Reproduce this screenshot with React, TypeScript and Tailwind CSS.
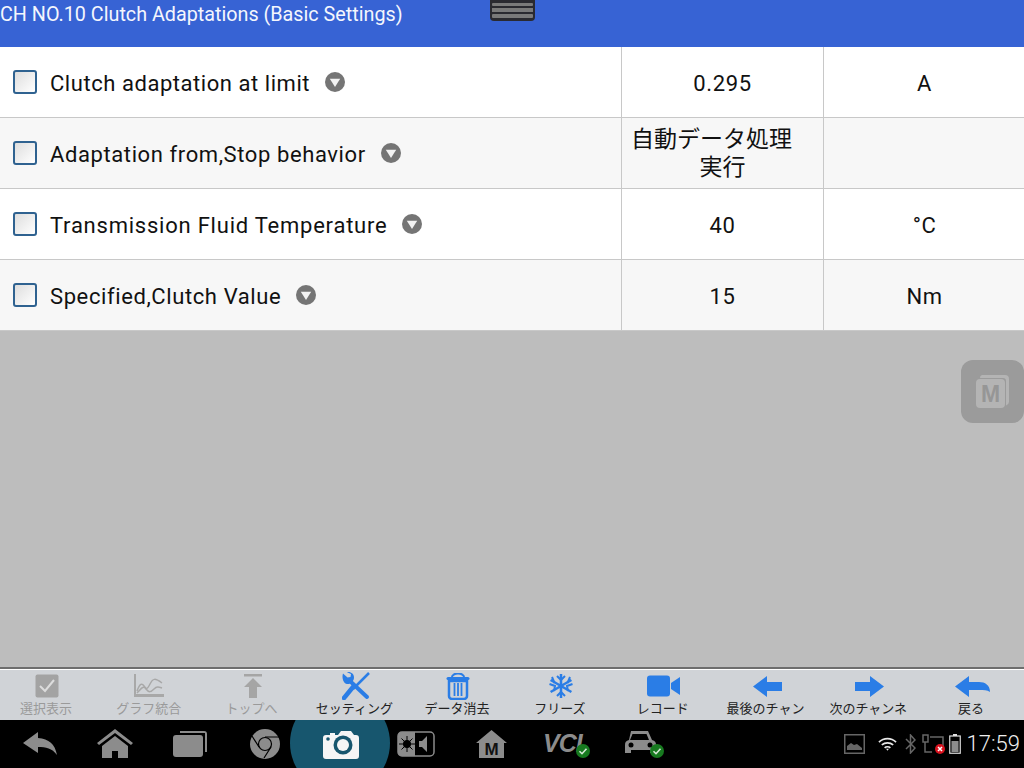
import type { ReactNode } from "react";

const rows: { name: string; value: ReactNode; unit: string; track: string }[] = [
  { name: "Clutch adaptation at limit", value: "0.295", unit: "A", track: "tracking-[0.55px]" },
  {
    name: "Adaptation from,Stop behavior",
    value: (
      <div className="text-[23px] leading-[28px] tracking-normal">
        <div className="pr-[22px] whitespace-nowrap">自動データ処理</div>
        <div>実行</div>
      </div>
    ),
    unit: "",
    track: "tracking-[0.6px]",
  },
  { name: "Transmission Fluid Temperature", value: "40", unit: "°C", track: "tracking-[0.77px]" },
  { name: "Specified,Clutch Value", value: "15", unit: "Nm", track: "tracking-[0.6px]" },
];

function Caret() {
  return (
    <svg width="20" height="20" viewBox="0 0 20 20" className="shrink-0">
      <circle cx="10" cy="10" r="10" fill="#757575" />
      <path d="M4.8 6.8h10.4L10 15z" fill="#f2f2f2" />
    </svg>
  );
}

function Badge() {
  return (
    <svg width="14" height="14" viewBox="0 0 14 14" className="absolute right-0 bottom-0">
      <circle cx="7" cy="7" r="7" fill="#177a1f" />
      <path d="M3.500 7.200l2.500 2.500 4.500-5" stroke="#d8e8d8" strokeWidth="1.600" fill="none" />
    </svg>
  );
}

function Tool({ label, off, children }: { label: string; off?: boolean; children: ReactNode }) {
  return (
    <div className="flex flex-col items-center w-[102.8px] shrink-0">
      <div className="h-[32px] flex items-center justify-center">{children}</div>
      <span className={`mr-[3px] text-[13px] leading-[14px] whitespace-nowrap ${off ? "text-[#9a9a9a]" : "text-[#222]"}`}>{label}</span>
    </div>
  );
}

export default function App() {
  return (
    <div className="w-[1024px] h-[768px] relative overflow-hidden flex flex-col bg-[#bdbdbd] font-['Roboto','Noto_Sans_CJK_JP',sans-serif]">
      <div className="h-[47px] shrink-0 bg-[#3763d4] text-[#f4f6fd] text-[19.75px] leading-[30px] whitespace-nowrap">
        CH NO.10 Clutch Adaptations (Basic Settings)
      </div>

      {/* pull-down handle */}
      <div className="absolute left-[490px] top-0 w-[45px] h-[21px] bg-[#2a2a30] rounded-b-[4px] flex flex-col justify-center gap-[2px] px-[2px] pb-[1px]">
        <div className="h-[3px] bg-[#7a7a7a] rounded-[1px]" />
        <div className="h-[4px] bg-[#7a7a7a]" />
        <div className="h-[4px] bg-[#7a7a7a] rounded-[1px]" />
      </div>

      <div className="shrink-0">
        {rows.map((r, i) => (
          <div
            key={r.name}
            className={`h-[71px] flex border-b border-[#c8c8c8] ${i % 2 ? "bg-[#f7f7f7]" : "bg-white"}`}
          >
            <div className="w-[621px] shrink-0 flex items-center pl-[13px]">
              <div className="w-[24px] h-[24px] shrink-0 rounded-[3px] border-2 border-[#2f6290] bg-gradient-to-br from-[#dedede] to-white" />
              <span className={`ml-[13px] mr-[15px] pt-[2px] text-[22px] text-[#111] whitespace-nowrap ${r.track}`}>{r.name}</span>
              <Caret />
            </div>
            <div className="w-[202px] shrink-0 border-l border-[#c8c8c8] flex items-center justify-center text-center text-[22px] tracking-[0.6px] pt-[2px] text-[#111]">
              {r.value}
            </div>
            <div className="flex-1 border-l border-[#c8c8c8] flex items-center justify-center text-[22px] tracking-[0.6px] pt-[2px] pl-[1px] text-[#111]">
              {r.unit}
            </div>
          </div>
        ))}
      </div>

      <div className="flex-1" />

      {/* floating M button */}
      <div className="absolute left-[961px] top-[360px] w-[63px] h-[63px] rounded-[12px] bg-[#9b9b9b] flex items-center justify-center">
        <svg width="38" height="38" viewBox="0 0 38 38">
          <path d="M8 2h23a4 4 0 0 1 4 4v23a4 4 0 0 1-3 3.500V8a3 3 0 0 0-3-3H6a3 3 0 0 1 2-3z" fill="#b4b4b4" />
          <rect x="2" y="6" width="29" height="29" rx="4" fill="#b4b4b4" />
          <text x="16.500" y="29" textAnchor="middle" fontSize="23" fontWeight="700" fill="#969696" fontFamily="Liberation Sans">M</text>
        </svg>
      </div>

      <div className="shrink-0 h-[53px] border-t-2 border-[#6e6e6e] bg-white pt-[1px]">
        <div className="h-full bg-[#d0d3d7] flex -ml-[4px] w-[1028px]">
          <Tool label="選択表示" off>
            <svg width="24" height="24" viewBox="0 0 24 24">
              <rect width="23" height="23" x="0.5" y="0.5" rx="2" fill="#a3a3a3" />
              <path d="M5 12l5 5 9-11" stroke="#dcdcdc" strokeWidth="2" fill="none" />
            </svg>
          </Tool>
          <Tool label="グラフ統合" off>
            <svg width="31" height="24" viewBox="0 0 31 24" className="mr-[3px]">
              <path d="M1 0h2v20h28v3H1z" fill="#a8a8a8" />
              <path d="M4 17c3-8 5-8 7-5s3 4 6-2 5-6 12-1M4 19c4-4 6-8 9-4s5 3 8 0 5-2 8-1" stroke="#a8a8a8" strokeWidth="1.5" fill="none" />
            </svg>
          </Tool>
          <Tool label="トップへ" off>
            <svg width="20" height="24" viewBox="0 0 20 24">
              <path d="M1 0h18v2.500H1zM10 4l9 9h-5v11H6V13H1z" fill="#a5a5a5" />
            </svg>
          </Tool>
          <Tool label="セッティング">
            <svg width="28" height="28" viewBox="0 0 28 28">
              <path d="M9 10l16 15" stroke="#2a7de6" strokeWidth="4" strokeLinecap="round" fill="none" />
              <path d="M1 1.500l4.500 4 3-.5.500-3L5 .200C9-.500 12 2 12 5.500s-3.500 7-7 6.500S-.500 6 1 1.500z" fill="#2a7de6" />
              <path d="M27 1L11 17" stroke="#2a7de6" strokeWidth="2.500" fill="none" />
              <path d="M2 26L11 15" stroke="#2a7de6" strokeWidth="4.500" strokeLinecap="round" fill="none" />
            </svg>
          </Tool>
          <Tool label="データ消去">
            <svg width="24" height="27" viewBox="0 0 24 27" className="mr-[2px]">
              <path d="M6 4a6 3.500 0 0 1 12 0" fill="none" stroke="#2a7de6" strokeWidth="2" />
              <rect x="0.500" y="4" width="23" height="3" rx="1.500" fill="#2a7de6" />
              <path d="M3 8h18v15a3 3 0 0 1-3 3H6a3 3 0 0 1-3-3z" fill="none" stroke="#2a7de6" strokeWidth="2.500" />
              <path d="M8.500 10v13M12 10v13M15.500 10v13" stroke="#2a7de6" strokeWidth="1.800" />
            </svg>
          </Tool>
          <Tool label="フリーズ">
            <svg width="26" height="26" viewBox="0 0 26 26" stroke="#2a7de6" strokeWidth="2.500" fill="none">
              <path d="M13 1v24M2.600 7l20.800 12M2.600 19L23.400 7" />
              <path d="M9 3l4 4 4-4M9 23l4-4 4 4M1.500 11l5.500 2-1 5M24.500 11L19 13l1 5M4 4l2.500 6M22 4l-2.500 6" strokeWidth="2" />
            </svg>
          </Tool>
          <Tool label="レコード">
            <svg width="33" height="22" viewBox="0 0 33 22" className="mr-[2px]">
              <rect width="23" height="21" y="0.500" rx="3" fill="#2a7de6" />
              <path d="M24 8l9-6v18l-9-6z" fill="#2a7de6" />
            </svg>
          </Tool>
          <Tool label="最後のチャン">
            <svg width="29" height="21" viewBox="0 0 29 21" className="ml-[2px]">
              <path d="M0 10.500L14 0v6h15v9H14v6z" fill="#2a7de6" />
            </svg>
          </Tool>
          <Tool label="次のチャンネ">
            <svg width="29" height="21" viewBox="0 0 29 21">
              <path d="M29 10.500L15 0v6H0v9h15v6z" fill="#2a7de6" />
            </svg>
          </Tool>
          <Tool label="戻る">
            <svg width="35" height="21" viewBox="0 0 35 21">
              <path d="M0 10.500L14 0v6h10c6 0 11 3 11 10-3-2-6-2-11-2H14v7z" fill="#2a7de6" />
            </svg>
          </Tool>
        </div>
      </div>

      <div className="shrink-0 h-[48px] bg-black flex items-center relative overflow-hidden pl-[23px]">
        <div className="absolute left-[290px] top-[-27px] w-[100px] h-[100px] rounded-full bg-[radial-gradient(circle,#17566e_0%,#17566e_80%,#0e3a4c_94%,#04141b_100%)]" />
        <svg width="34" height="28" viewBox="0 0 34 28" className="relative">
          <path d="M15 2L0 13l15 10v-6c8 0 14 1 19 8C32 14 26 9 15 8z" fill="#8c8c8c" />
        </svg>
        <svg width="36" height="30" viewBox="0 0 36 30" className="relative ml-[40px]">
          <path d="M18 0L0 14l2 2L18 4l16 12 2-2z" fill="#8c8c8c" />
          <path d="M18 7L5 17v12h10v-7h6v7h10V17z" fill="#8c8c8c" />
        </svg>
        <svg width="34" height="26" viewBox="0 0 34 26" className="relative ml-[40px]">
          <path d="M7 0h24a3 3 0 0 1 3 3v18h-2V2H7z" fill="#8c8c8c" />
          <rect y="4" width="30" height="22" rx="3" fill="#8c8c8c" />
        </svg>
        <svg width="30" height="30" viewBox="0 0 30 30" className="relative ml-[43px]">
          <circle cx="15" cy="15" r="15" fill="#8c8c8c" />
          <circle cx="15" cy="15" r="6.500" fill="#8c8c8c" stroke="#000" strokeWidth="1.200" />
          <path d="M15 8h14M9 18L2 7M21 18l-7 11" stroke="#000" strokeWidth="1.200" />
        </svg>
        <svg width="36" height="29" viewBox="0 0 36 29" className="relative ml-[43px]">
          <path d="M3 5h4V3h5v2h3l3-4h10l3 4h2a3 3 0 0 1 3 3v18a3 3 0 0 1-3 3H3a3 3 0 0 1-3-3V8a3 3 0 0 1 3-3z" fill="#f5f5f5" />
          <circle cx="20" cy="15" r="9.500" fill="#17566e" />
          <circle cx="20" cy="15" r="6" fill="#f5f5f5" />
          <circle cx="5" cy="9" r="1.800" fill="#17566e" />
        </svg>
        <svg width="38" height="26" viewBox="0 0 38 26" className="relative ml-[38px]">
          <rect x="1" y="1" width="36" height="24" rx="4" fill="#000" stroke="#8c8c8c" strokeWidth="1.500" />
          <path d="M5 1h13v24H5a4 4 0 0 1-4-4V5a4 4 0 0 1 4-4z" fill="#8c8c8c" />
          <circle cx="10" cy="13" r="4" fill="#000" />
          <path d="M10 5v16M2 13h16M4.500 7.500l11 11M15.500 7.500l-11 11" stroke="#000" strokeWidth="1" />
          <path d="M22 10h3l5-5v16l-5-5h-3z" fill="#8c8c8c" />
        </svg>
        <svg width="31" height="28" viewBox="0 0 31 28" className="relative ml-[41px]">
          <path d="M15.500 0l15.500 13h-3v15H3V13H0z" fill="#8c8c8c" />
          <text x="15.500" y="25" textAnchor="middle" fontSize="17" fontWeight="700" fill="#111" fontFamily="Liberation Sans">M</text>
        </svg>
        <div className="relative ml-[36px] w-[47px] h-[28px]">
          <span className="block text-[25px] leading-[26px] font-['Liberation_Sans'] font-bold italic text-[#8c8c8c] tracking-[-1px]">VCI</span>
          <Badge />
        </div>
        <div className="relative ml-[34px] w-[40px] h-[28px]">
          <svg width="33" height="26" viewBox="0 0 33 26">
            <path d="M7 1h17l4 9c3 1 4 2 4 5v8h-6v-3H7v3H1v-8c0-3 1-4 4-5z" fill="#8c8c8c" />
            <path d="M8.500 4h14l2.500 6H6z" fill="#000" />
            <circle cx="7" cy="15" r="2.500" fill="#000" />
            <circle cx="26" cy="15" r="2.500" fill="#000" />
          </svg>
          <Badge />
        </div>

        <div className="relative ml-auto mr-[4px] flex items-center">
          <svg width="21" height="20" viewBox="0 0 21 20">
            <rect x="0.750" y="0.750" width="19.500" height="18.500" fill="none" stroke="#666" strokeWidth="1.500" />
            <path d="M3 16v-4l4-3 3 2 3-1 5 4v2z" fill="#666" />
          </svg>
          <svg width="19" height="14" viewBox="0 0 20 14" className="ml-[13px]">
            <path d="M1 5c5-5 13-5 18 0M4 8c3.500-3 8.500-3 12 0M7 11c1.500-1.500 4.500-1.500 6 0" stroke="#e8e8e8" strokeWidth="1.800" fill="none" />
            <path d="M8.500 12l1.500 2 1.500-2z" fill="#e8e8e8" />
          </svg>
          <svg width="11" height="20" viewBox="0 0 11 20" className="ml-[8px]">
            <path d="M1 5l9 9-4.500 5V1L10 6l-9 9" stroke="#666" strokeWidth="1.500" fill="none" />
          </svg>
          <div className="relative ml-[6px] w-[22px] h-[20px]">
            <svg width="22" height="20" viewBox="0 0 22 20">
              <path d="M1 1h5v7H1zM8 3h13v11M3 8v10h7" stroke="#666" strokeWidth="1.500" fill="none" />
            </svg>
            <svg width="10" height="10" viewBox="0 0 10 10" className="absolute right-[-1px] bottom-0">
              <circle cx="5" cy="5" r="5" fill="#d8121e" />
              <path d="M3 3l4 4M7 3l-4 4" stroke="#fff" strokeWidth="1.500" />
            </svg>
          </div>
          <svg width="12" height="20" viewBox="0 0 12 20" className="ml-[5px]">
            <path d="M4 0h4v2H4z" fill="#e0e0e0" />
            <rect x="0.750" y="2" width="10.500" height="17.250" fill="none" stroke="#e0e0e0" strokeWidth="1.200" />
            <rect x="2.500" y="7" width="7" height="11" fill="#8c8c8c" />
          </svg>
          <span className="ml-[6px] text-[22px] leading-[24px] font-light text-[#eee]">17:59</span>
        </div>
      </div>
    </div>
  );
}
